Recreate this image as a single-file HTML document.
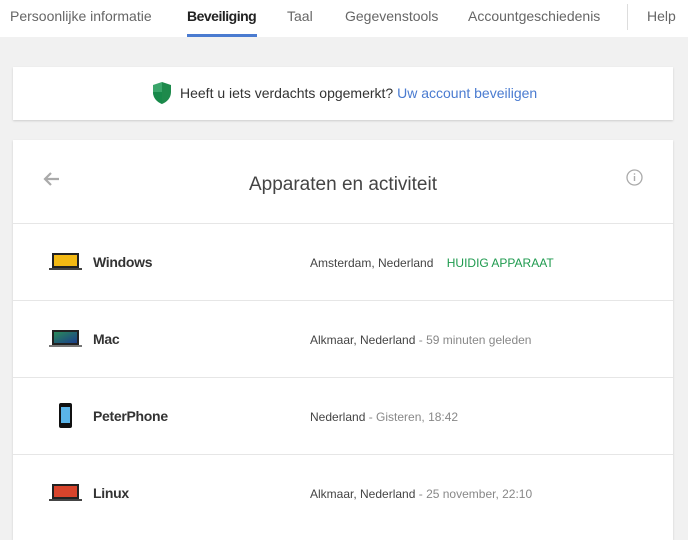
<!DOCTYPE html>
<html><head><meta charset="utf-8"><style>
*{margin:0;padding:0;box-sizing:border-box}
body{width:688px;height:527px;overflow:hidden;background:#f1f1f1;font-family:"Liberation Sans",sans-serif;position:relative}
.nav{position:absolute;left:0;top:0;width:688px;height:37px;background:#fff}
.nav span{position:absolute;top:8px;font-size:14px;color:#666;white-space:nowrap}
.ul{position:absolute;left:187px;top:34px;width:70px;height:3px;background:#4a7bd0}
.sep{position:absolute;left:627px;top:4px;width:1px;height:26px;background:#ddd}
.card{position:absolute;left:13px;width:660px;background:#fff;box-shadow:0 1px 2px rgba(0,0,0,.15)}
.row{position:absolute;left:0;width:660px;height:77px;border-top:1px solid #e6e6e6}
.name{position:absolute;left:80px;top:30px;font-size:14px;font-weight:bold;color:#333;letter-spacing:-0.3px}
.loc{position:absolute;left:297px;top:32px;font-size:12px;color:#444;white-space:nowrap}
.loc i{font-style:normal;color:#888}
.ic{position:absolute}
</style></head><body>
<div class="nav">
<span style="left:10px">Persoonlijke informatie</span>
<span style="left:187px;color:#222;font-weight:bold;letter-spacing:-0.5px">Beveiliging</span>
<span style="left:287px">Taal</span>
<span style="left:345px">Gegevenstools</span>
<span style="left:468px">Accountgeschiedenis</span>
<span style="left:647px">Help</span>
<div class="ul"></div><div class="sep"></div>
</div>
<div class="card" style="top:67px;height:53px">
<svg style="position:absolute;left:138px;top:14px" width="22" height="24" viewBox="0 0 22 24"><path d="M11 1L2 4v7c0 6 4 10 9 12V1z" fill="#3aa56a"/><path d="M11 1l9 3v7c0 6-4 10-9 12V1z" fill="#1e8a4c"/><path d="M2 11h9v12c-5-2-9-6-9-12z" fill="#17894a"/></svg>
<span style="position:absolute;left:167px;top:18px;font-size:14px;color:#333;white-space:nowrap">Heeft u iets verdachts opgemerkt? <span style="color:#4a7bd0">Uw account beveiligen</span></span>
</div>
<div class="card" style="top:140px;height:400px">
<svg style="position:absolute;left:29px;top:31px" width="18" height="16" viewBox="0 0 18 16"><path d="M17 8H3M9 2L3 8l6 6" stroke="#aaa" stroke-width="2.2" fill="none"/></svg>
<div style="position:absolute;left:0;width:660px;top:34px;text-align:center;font-size:19px;color:#444">Apparaten en activiteit</div>
<svg style="position:absolute;left:613px;top:29px" width="17" height="17" viewBox="0 0 17 17"><circle cx="8.5" cy="8.5" r="7.5" stroke="#aaa" fill="none" stroke-width="1.3"/><rect x="7.8" y="7" width="1.4" height="5" fill="#aaa"/><rect x="7.8" y="4.3" width="1.4" height="1.4" fill="#aaa"/></svg>
<div class="row" style="top:83px">
<svg class="ic" style="left:36px;top:28px" width="34" height="20"><rect x="3" y="1" width="27" height="15" fill="#222"/><rect x="5" y="3" width="23" height="11" fill="#f3b913"/><rect x="0" y="16" width="33" height="2" fill="#444"/></svg>
<div class="name">Windows</div>
<div class="loc">Amsterdam, Nederland <span style="color:#1e9a4e;margin-left:10px">HUIDIG APPARAAT</span></div></div>
<div class="row" style="top:160px">
<svg class="ic" style="left:36px;top:28px" width="34" height="20"><rect x="3" y="1" width="27" height="15" fill="#222"/><defs><linearGradient id="g" x1="0" y1="0" x2="1" y2="1"><stop offset="0" stop-color="#2a8a5a"/><stop offset="1" stop-color="#1b3d8a"/></linearGradient></defs><rect x="5" y="3" width="23" height="11" fill="url(#g)"/><rect x="0" y="16" width="33" height="2" fill="#777"/></svg>
<div class="name">Mac</div>
<div class="loc">Alkmaar, Nederland <i>- 59 minuten geleden</i></div></div>
<div class="row" style="top:237px">
<svg class="ic" style="left:46px;top:25px" width="14" height="26"><rect x="0" y="0" width="13" height="25" rx="2" fill="#111"/><rect x="2" y="4" width="9" height="16" fill="#5ab4e8"/></svg>
<div class="name">PeterPhone</div>
<div class="loc">Nederland <i>- Gisteren, 18:42</i></div></div>
<div class="row" style="top:314px">
<svg class="ic" style="left:36px;top:28px" width="34" height="20"><rect x="3" y="1" width="27" height="15" fill="#222"/><rect x="5" y="3" width="23" height="11" fill="#d8442c"/><rect x="0" y="16" width="33" height="2" fill="#444"/></svg>
<div class="name">Linux</div>
<div class="loc">Alkmaar, Nederland <i>- 25 november, 22:10</i></div></div>
</div>
</body></html>
